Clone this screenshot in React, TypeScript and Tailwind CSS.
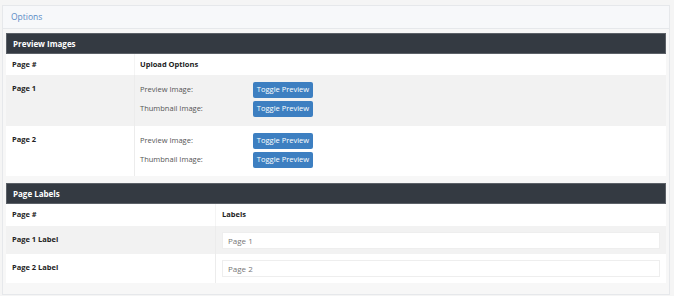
import React from 'react';

const font = { fontFamily: '"Open Sans", "Noto Sans", sans-serif' };

const ToggleButton: React.FC = () => (
  <button className="h-[16px] w-[60px] rounded-[2px] bg-[#3d7fc1] text-[7.5px] text-white leading-none">
    Toggle Preview
  </button>
);

const PreviewRow: React.FC<{ page: string; shaded?: boolean }> = ({ page, shaded }) => (
  <div className={`flex ${shaded ? 'h-[51px] bg-[#f2f2f2]' : 'h-[50px] bg-white'}`}>
    <div className="w-[128px] pl-[6px] pt-[8px] text-[7.5px] font-bold text-[#222]">{page}</div>
    <div className="flex-1 border-l border-[#ececec] pl-[5px] pt-[7px] flex flex-col gap-[3px]">
      <div className="flex items-center">
        <span className="w-[113px] text-[7.5px] text-[#555]">Preview Image:</span>
        <ToggleButton />
      </div>
      <div className="flex items-center">
        <span className="w-[113px] text-[7.5px] text-[#555]">Thumbnail Image:</span>
        <ToggleButton />
      </div>
    </div>
  </div>
);

const LabelRow: React.FC<{ label: string; value: string; shaded?: boolean }> = ({ label, value, shaded }) => (
  <div className={`flex ${shaded ? 'h-[28px] bg-[#f2f2f2]' : 'h-[29px] bg-white'}`}>
    <div className="w-[209px] pl-[6px] pt-[8px] text-[7.5px] font-bold text-[#222]">{label}</div>
    <div className="flex-1 border-l border-[#ececec] px-[6px] pt-[6px]">
      <div className="h-[17px] border border-[#eeeeee] bg-white pl-[5px] flex items-center text-[8px] text-[#777]">
        {value}
      </div>
    </div>
  </div>
);

const SectionBar: React.FC<{ title: string }> = ({ title }) => (
  <div className="h-[21px] bg-[#343a42] border border-[#5c6168] flex items-center pl-[6px] text-[8px] font-bold text-white">
    {title}
  </div>
);

export default function App() {
  return (
    <div className="w-[674px] h-[296px] bg-[#f5f5f5] pt-[5px] pl-[2px] pr-[4px]" style={font}>
      <div className="h-[290px] border border-[#e6e8eb] bg-[#f7f7f7]">
        <div className="h-[23px] bg-[#f7f8fa] border-b border-[#e6e8eb] flex items-center pl-[8px] text-[8.5px] text-[#5a8bc6]">
          Options
        </div>
        <div className="pl-[3px] pr-[3px] pt-[4px]">
          <SectionBar title="Preview Images" />
          <div className="flex h-[21px] bg-white">
            <div className="w-[128px] pl-[6px] flex items-center text-[7.5px] font-bold text-[#222]">Page #</div>
            <div className="flex-1 border-l border-[#f4f4f4] pl-[5px] flex items-center text-[7.5px] font-bold text-[#222]">
              Upload Options
            </div>
          </div>
          <PreviewRow page="Page 1" shaded />
          <PreviewRow page="Page 2" />

          <div className="mt-[7px]">
            <SectionBar title="Page Labels" />
            <div className="flex h-[22px] bg-white">
              <div className="w-[209px] pl-[6px] flex items-center text-[7.5px] font-bold text-[#222]">Page #</div>
              <div className="flex-1 border-l border-[#f4f4f4] pl-[6px] flex items-center text-[7.5px] font-bold text-[#222]">
                Labels
              </div>
            </div>
            <LabelRow label="Page 1 Label" value="Page 1" shaded />
            <LabelRow label="Page 2 Label" value="Page 2" />
          </div>
        </div>
      </div>
    </div>
  );
}
